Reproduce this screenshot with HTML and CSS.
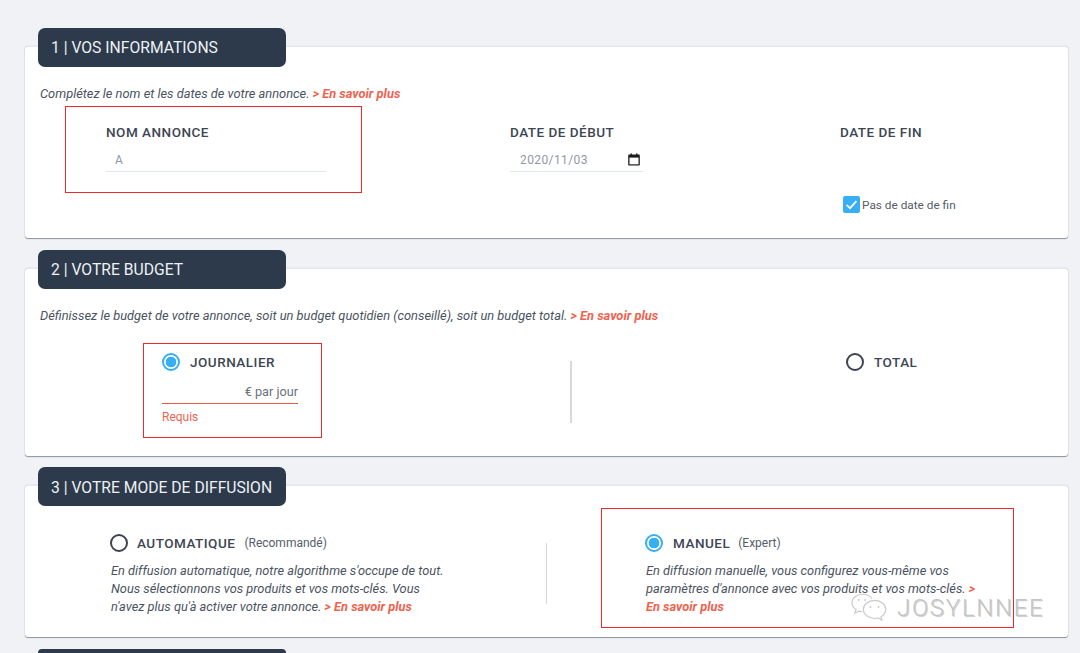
FILE: index.html
```html
<!DOCTYPE html>
<html lang="fr">
<head>
<meta charset="utf-8">
<title>Annonce</title>
<link rel="stylesheet" href="styles.css">
</head>
<body>
<section class="step step-info">
  <h2 class="tab">1 | VOS INFORMATIONS</h2>
  <div class="card">
    <p class="intro">Complétez le nom et les dates de votre annonce. <a class="more">&gt; En savoir plus</a></p>
    <div class="fields">
      <div class="field">
        <div class="label">NOM ANNONCE</div>
        <div class="input input-name">A</div>
      </div>
      <div class="field">
        <div class="label">DATE DE DÉBUT</div>
        <div class="input input-date"><span>2020/11/03</span>
          <svg class="cal" width="12" height="13" viewBox="0 0 12 13"><path d="M1 1.500h10a.8.8 0 0 1 .8.8v9.400a.8.8 0 0 1-.8.8H1a.8.8 0 0 1-.8-.8V2.300A.8.8 0 0 1 1 1.500z" fill="#1c1c1c"/><rect x="1.500" y="4.600" width="9" height="6.700" fill="#fff"/><rect x="2.600" y=".4" width="1.300" height="2" fill="#1c1c1c"/><rect x="8.100" y=".4" width="1.300" height="2" fill="#1c1c1c"/></svg>
        </div>
      </div>
      <div class="field">
        <div class="label">DATE DE FIN</div>
        <div class="check-row">
          <svg class="check" width="17" height="17" viewBox="0 0 17 17"><rect width="17" height="17" rx="2" fill="#36aff5"/><path d="M3.600 8.800l3.400 3.400 6.400-7" fill="none" stroke="#fff" stroke-width="1.800"/></svg>
          <span>Pas de date de fin</span>
        </div>
      </div>
    </div>
    <div class="mark mark-name"></div>
  </div>
</section>

<section class="step step-budget">
  <h2 class="tab">2 | VOTRE BUDGET</h2>
  <div class="card">
    <p class="intro">Définissez le budget de votre annonce, soit un budget quotidien (conseillé), soit un budget total. <a class="more">&gt; En savoir plus</a></p>
    <div class="budget">
      <div class="budget-day">
        <div class="radio-row"><span class="radio on"></span><span class="label">JOURNALIER</span></div>
        <div class="amount">€ par jour</div>
        <div class="error">Requis</div>
      </div>
      <div class="rule rule-budget"></div>
      <div class="budget-total">
        <div class="radio-row"><span class="radio"></span><span class="label">TOTAL</span></div>
      </div>
    </div>
    <div class="mark mark-budget"></div>
  </div>
</section>

<section class="step step-mode">
  <h2 class="tab">3 | VOTRE MODE DE DIFFUSION</h2>
  <div class="card">
    <div class="modes">
      <div class="mode mode-auto">
        <div class="radio-row"><span class="radio"></span><span class="label">AUTOMATIQUE</span><span class="hint">(Recommandé)</span></div>
        <p class="desc">En diffusion automatique, notre algorithme s'occupe de tout. Nous sélectionnons vos produits et vos mots-clés. Vous n'avez plus qu'à activer votre annonce. <a class="more">&gt; En savoir plus</a></p>
      </div>
      <div class="rule rule-mode"></div>
      <div class="mode mode-manual">
        <div class="radio-row"><span class="radio on"></span><span class="label">MANUEL</span><span class="hint">(Expert)</span></div>
        <p class="desc">En diffusion manuelle, vous configurez vous-même vos paramètres d'annonce avec vos produits et vos mots-clés. <a class="more">&gt; En savoir plus</a></p>
      </div>
    </div>
    <div class="mark mark-mode"></div>
  </div>
</section>

<section class="step step-next">
  <div class="tab tab-next"></div>
</section>

<div class="watermark">
  <svg width="38" height="32" viewBox="0 0 40 32" fill="none" stroke="#c9c9c9" stroke-width="1.200"><path d="M22 6C20 3 16 1.500 12 1.500 6 1.500 1 5.500 1 10.500c0 3 1.700 5.500 4.300 7.200L4 21.500l4.500-2.200c1 .3 2 .5 3 .5"/><path d="M25 8c-6.500 0-12 4.300-12 9.500S18.500 27 25 27c1.300 0 2.500-.2 3.700-.5l3.800 2.300-1-3.500c3-1.800 5-4.700 5-8C36.500 12.300 31.500 8 25 8z"/><circle cx="8" cy="7.500" r="1" fill="#c9c9c9" stroke="none"/><circle cx="15" cy="7.500" r="1" fill="#c9c9c9" stroke="none"/><circle cx="20.500" cy="15" r="1" fill="#c9c9c9" stroke="none"/><circle cx="29" cy="15" r="1" fill="#c9c9c9" stroke="none"/></svg>
  <span>JOSYLNNEE</span>
</div>
</body>
</html>
```
FILE: styles.css
```css
* { box-sizing: border-box; }
html, body { margin: 0; height: 653px; overflow: hidden; }
body {
  background: #f0f2f6;
  padding: 28px 12px 0 25px;
  font-family: Roboto, "Liberation Sans", sans-serif;
  color: #3d4654;
  position: relative;
}
.step { position: relative; }
.step-budget { margin-top: 12px; }
.step-mode { margin-top: 11px; }
.step-next { margin-top: 12px; }

.tab {
  position: relative;
  z-index: 1;
  width: 248px;
  height: 39px;
  margin: 0 0 -21px 13px;
  padding: 0 0 0 13px;
  background: #2c3a4b;
  border-radius: 7px;
  color: #eef1f4;
  font-size: 15.7px;
  font-weight: 400;
  line-height: 40px;
  white-space: nowrap;
}
.step-mode .tab { line-height: 41px; }
.tab-next { height: 4px; margin-bottom: 0; border-radius: 7px 7px 0 0; }

.card {
  position: relative;
  background: #fff;
  border-top: 1px solid #e2e7f0;
  border-radius: 3px;
  box-shadow: 0 1px 1px rgba(100, 110, 125, .7), 0 0 1px rgba(120, 130, 145, .5);
}
.step-info .card { height: 192px; padding-top: 39px; }
.step-budget .card { height: 188px; padding-top: 39px; }
.step-mode .card { height: 152px; padding-top: 48px; }

.intro {
  margin: 0 0 0 15px;
  font-size: 12.85px;
  font-style: italic;
  line-height: 15px;
  color: #4a5361;
}
.more { color: #ee6350; font-weight: 700; }

.label {
  font-size: 13.5px;
  font-weight: 500;
  letter-spacing: .5px;
  line-height: 16px;
  color: #3d4654;
}

.fields {
  display: grid;
  grid-template-columns: 404px 330px 1fr;
  padding: 23px 0 0 81px;
}
.input {
  display: flex;
  align-items: center;
  justify-content: space-between;
  height: 24px;
  margin-top: 8px;
  padding: 0 3px 0 9px;
  border-bottom: 1px solid #dfe4ee;
  font-size: 12px;
  letter-spacing: .4px;
  color: #8f98a6;
}
.input-name { width: 220px; }
.input-date { width: 133px; padding-left: 10px; }
.cal { display: block; }
.check-row {
  display: flex;
  align-items: center;
  gap: 2px;
  margin: 56px 0 0 3px;
  font-size: 11.8px;
  color: #555d69;
}

.radio-row { display: flex; align-items: center; }
.radio {
  flex: none;
  width: 18px;
  height: 18px;
  margin-right: 10px;
  border: 2px solid #3d4350;
  border-radius: 50%;
}
.radio.on {
  border-color: #36aff5;
  background: radial-gradient(circle, #36aff5 0 5px, #fff 5.6px);
}
.hint { margin-left: 8px; font-size: 12px; color: #555d69; }

.budget { position: relative; display: flex; height: 92px; padding-top: 7px; }
.budget-day { width: 136px; margin: 23px 0 0 137px; }
.amount {
  height: 24px;
  margin-top: 9px;
  padding-top: 2px;
  border-bottom: 1px solid #f0583f;
  font-size: 12.7px;
  line-height: 20px;
  text-align: right;
  color: #6a717c;
}
.error { margin-top: 6px; font-size: 12px; line-height: 14px; color: #ee6350; }
.rule { width: 1px; background: #d5d8dd; flex: none; }
.rule-budget { width: 2px; height: 62px; margin: 31px 0 0 272px; }
.budget-total { margin: 23px 0 0 274px; }

.modes { display: flex; position: relative; }
.mode-auto { width: 340px; margin-left: 85px; }
.mode-auto .radio { margin-right: 9px; }
.mode-auto .hint { margin-left: 9px; }
.mode-manual { width: 335px; margin-left: 98px; }
.desc {
  margin: 10px 0 0 1px;
  font-size: 12.8px;
  font-style: italic;
  line-height: 18px;
  color: #4a5361;
}
.rule-mode { height: 61px; margin: 9px 0 0 96px; }

/* red review annotations drawn over the form */
.mark { position: absolute; border: 1px solid #f0272c; pointer-events: none; }
.mark-name { left: 40px; top: 59px; width: 297px; height: 87px; }
.mark-budget { left: 118px; top: 74px; width: 179px; height: 95px; }
.mark-mode { left: 576px; top: 22px; width: 413px; height: 120px; }

.watermark {
  position: absolute;
  left: 851px;
  top: 592px;
  display: flex;
  align-items: center;
  gap: 8px;
  color: #c4c4c4;
  font-size: 24px;
  font-weight: 300;
  letter-spacing: 1.7px;
  line-height: 30px;
  text-shadow: 1px 1px 0 rgba(120, 120, 120, .35);
}
.watermark svg { flex: none; }
```
